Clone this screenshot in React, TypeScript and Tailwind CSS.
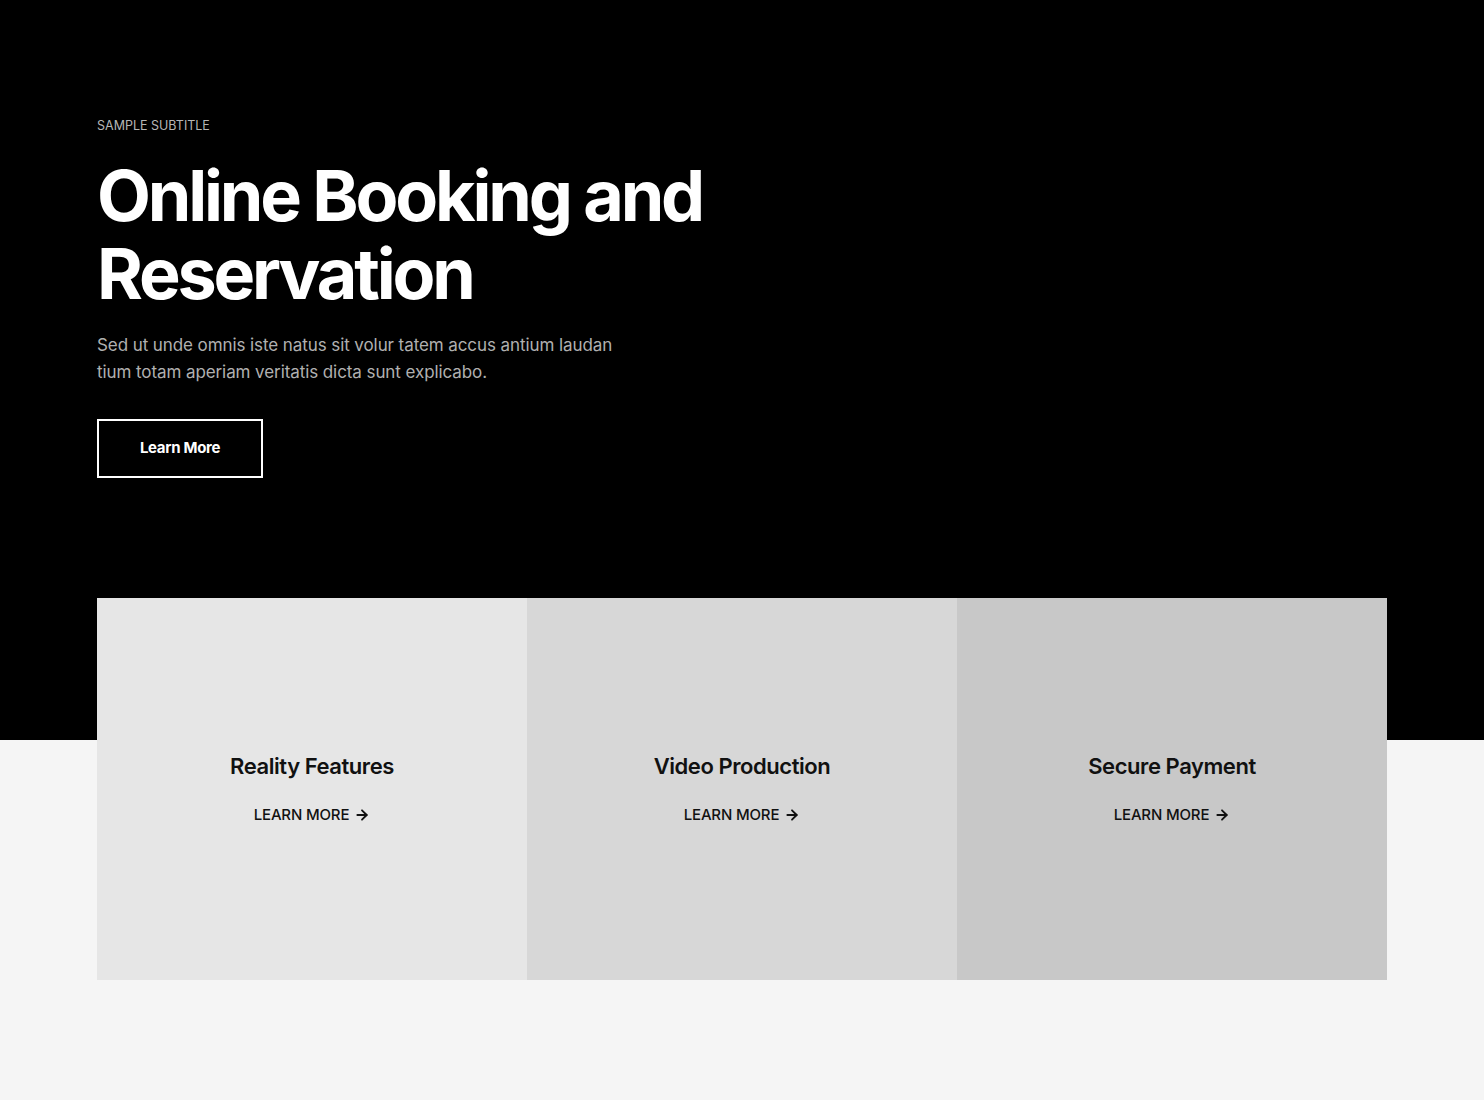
import { ArrowRight } from "lucide-react";

const FONT = { fontFamily: "Inter, 'Noto Sans', sans-serif" };

const cards = [
  { title: "Reality Features", bg: "bg-[#e6e6e6]" },
  { title: "Video Production", bg: "bg-[#d7d7d7]" },
  { title: "Secure Payment", bg: "bg-[#c8c8c8]" },
];

export default function App() {
  return (
    <div className="min-h-[1100px] bg-[#f5f5f5]" style={FONT}>
      {/* Hero */}
      <section className="h-[740px] bg-black px-[97px] pt-[118px]">
        <p className="text-[12.5px] leading-[16px] uppercase text-[#b5b5b5]">
          Sample subtitle
        </p>
        <h1 className="mt-[23px] text-[70px] leading-[78px] font-bold tracking-[-0.045em] text-white">
          Online Booking and
          <br />
          Reservation
        </h1>
        <p className="mt-[19px] max-w-[540px] text-[17px] leading-[27px] text-[#b0b0b0] tracking-[-0.005em]">
          Sed ut unde omnis iste natus sit volur tatem accus antium laudan
          tium totam aperiam veritatis dicta sunt explicabo.
        </p>
        <button
          type="button"
          className="mt-[33px] flex h-[59px] w-[166px] items-center justify-center border-2 border-white text-[15px] font-bold tracking-[-0.02em] text-white"
        >
          Learn More
        </button>
      </section>

      {/* Feature cards overlap the hero's bottom edge */}
      <section className="-mt-[142px] px-[97px] pb-[120px]">
        <div className="grid grid-cols-3">
          {cards.map((c) => (
            <div
              key={c.title}
              className={`flex h-[382px] flex-col items-center justify-center pb-[2px] ${c.bg}`}
            >
              <h3 className="text-[22px] leading-[28px] font-semibold tracking-[-0.02em] text-[#111]">
                {c.title}
              </h3>
              <a
                href="#"
                className="mt-[25px] flex items-center gap-[5px] text-[15px] leading-[20px] font-medium uppercase tracking-[-0.01em] text-[#111]"
              >
                Learn more
                <ArrowRight size={16} strokeWidth={2.75} />
              </a>
            </div>
          ))}
        </div>
      </section>
    </div>
  );
}
